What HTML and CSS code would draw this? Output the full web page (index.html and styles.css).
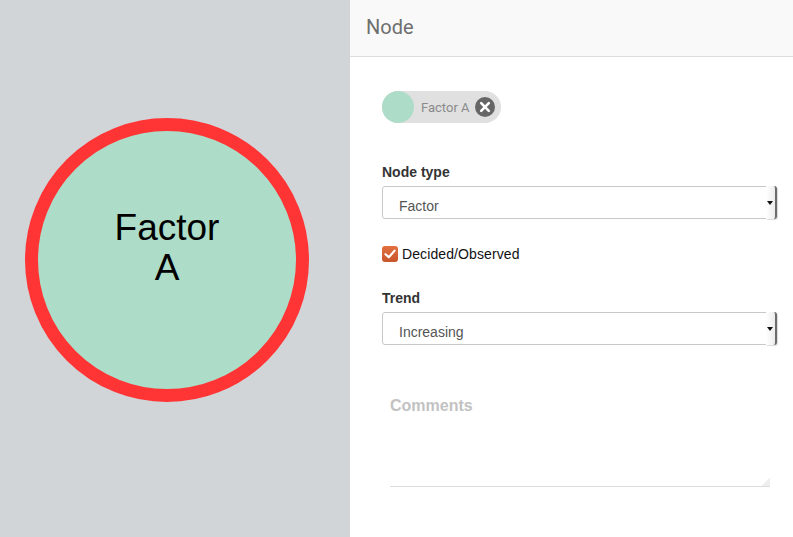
FILE: index.html
```html
<!DOCTYPE html>
<html>
<head>
<meta charset="utf-8">
<link rel="stylesheet" href="styles.css">
</head>
<body>
<div class="app">
  <div class="canvas">
    <div class="node">
      <div class="node-label">Factor<br>A</div>
    </div>
  </div>
  <div class="panel">
    <div class="header">Node</div>
    <div class="content">
      <div class="chip">
        <span class="chip-dot"></span>
        <span class="chip-text">Factor A</span>
        <span class="chip-close">
          <svg width="20" height="20" viewBox="0 0 20 20"><circle cx="10" cy="10" r="10" fill="#666"/><path d="M6.2 6.2 L13.8 13.8 M13.8 6.2 L6.2 13.8" stroke="#fff" stroke-width="2.6" stroke-linecap="round"/></svg>
        </span>
      </div>
      <div class="field field-type">
        <div class="label">Node type</div>
        <div class="select"><span class="select-value">Factor</span><span class="select-arrow"></span></div>
      </div>
      <label class="check">
        <span class="check-box">
          <svg width="16" height="16" viewBox="0 0 16 16"><path d="M3.5 8.2 L6.8 11.3 L12.6 4.6" fill="none" stroke="#fff" stroke-width="2.2" stroke-linecap="round" stroke-linejoin="round"/></svg>
        </span>
        <span class="check-text">Decided/Observed</span>
      </label>
      <div class="field field-trend">
        <div class="label">Trend</div>
        <div class="select trend"><span class="select-value">Increasing</span><span class="select-arrow"></span></div>
      </div>
      <div class="comments">
        <div class="placeholder">Comments</div>
        <span class="resize"></span>
      </div>
    </div>
  </div>
</div>
</body>
</html>
```

FILE: styles.css
```css
html, body {
  margin: 0;
  padding: 0;
  width: 793px;
  height: 537px;
  overflow: hidden;
}
body {
  font-family: "Liberation Sans", Arial, sans-serif;
}
.app {
  display: flex;
  height: 537px;
}
.canvas {
  width: 350px;
  flex: none;
  background: #d2d5d8;
  position: relative;
}
.node {
  position: absolute;
  left: 25px;
  top: 118px;
  width: 258px;
  height: 258px;
  border: 13.5px solid #ff3535;
  border-radius: 50%;
  background: #addcc8;
}
.node-label {
  position: absolute;
  left: 0;
  right: 0;
  top: 77px;
  text-align: center;
  font-family: "Liberation Sans", Arial, sans-serif;
  font-size: 37px;
  line-height: 40px;
  color: #000;
}
.panel {
  flex: 1;
  background: #fff;
  display: flex;
  flex-direction: column;
}
.header {
  height: 56px;
  background: #f9f9f9;
  border-bottom: 1px solid #dcdcdc;
  padding-left: 16px;
  font-family: Roboto, "Noto Sans", sans-serif;
  font-size: 20px;
  line-height: 54px;
  color: #6f6f6f;
}
.content {
  padding: 34px 16px 0 32px;
  display: flex;
  flex-direction: column;
}
.chip {
  align-self: flex-start;
  display: flex;
  align-items: center;
  height: 32px;
  background: #e0e0e0;
  border-radius: 16px;
  padding-right: 6px;
}
.chip-dot {
  width: 32px;
  height: 32px;
  border-radius: 50%;
  background: #addcc8;
}
.chip-text {
  margin-left: 7px;
  font-family: Roboto, "Noto Sans", sans-serif;
  font-size: 13px;
  color: #8a8a8a;
}
.chip-close {
  display: flex;
  margin-left: 5px;
}
.field-type {
  margin-top: 41px;
}
.label {
  font-size: 14px;
  font-weight: bold;
  color: #333;
  line-height: 17px;
  margin-bottom: 5px;
}
.select {
  height: 31px;
  border: 1px solid #c8c8c8;
  border-radius: 3px;
  display: flex;
  align-items: center;
  position: relative;
  font-size: 14px;
  color: #555;
}
.select-value {
  padding-left: 16px;
  padding-top: 6px;
}
.trend .select-value {
  padding-top: 6px;
  height: 19px;
  overflow: hidden;
  line-height: 20px;
}
.select-arrow {
  position: absolute;
  right: -1px;
  top: -1px;
  bottom: -1px;
  width: 9px;
  background: linear-gradient(to right, #fff, #ececec);
  border-right: 2px solid #6c6c6c;
  border-radius: 0 3px 3px 0;
  box-shadow: 1px 1px 1px rgba(0,0,0,0.15);
}
.select-arrow::after {
  content: "";
  position: absolute;
  right: 2px;
  top: 15px;
  border-left: 3px solid transparent;
  border-right: 3px solid transparent;
  border-top: 4px solid #111;
}
.check {
  display: flex;
  align-items: center;
  margin-top: 27px;
  height: 16px;
}
.check-box {
  width: 16px;
  height: 16px;
  border-radius: 3px;
  background: linear-gradient(#e2703f, #c9552c);
  display: flex;
}
.check-text {
  margin-left: 4px;
  font-size: 14px;
  letter-spacing: 0.1px;
  color: #111;
}
.field-trend {
  margin-top: 28px;
}
.trend {
  margin-top: 1px;
}
.comments {
  margin: 41px 7px 0 8px;
  height: 100px;
  border-bottom: 1px solid #dcdcdc;
  position: relative;
}
.placeholder {
  padding-top: 11px;
  font-size: 16px;
  font-weight: bold;
  color: #c2c2c2;
}
.resize {
  position: absolute;
  right: 0;
  bottom: 0;
  width: 8px;
  height: 8px;
  background: linear-gradient(135deg, transparent 50%, #eeeeee 50%);
}
```
